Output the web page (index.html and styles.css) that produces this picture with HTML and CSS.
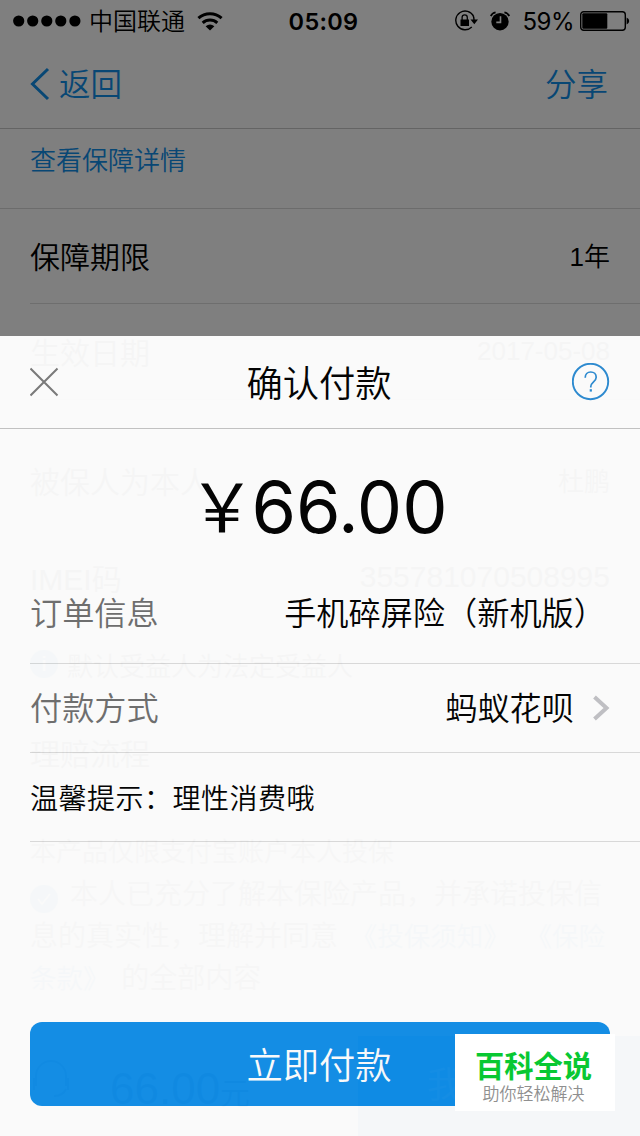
FILE: index.html
```html
<!DOCTYPE html>
<html lang="zh-CN">
<head>
<meta charset="utf-8">
<title>确认付款</title>
<link rel="stylesheet" href="styles.css">
</head>
<body>
<div class="phone">
  <div class="page">
    <div class="status">
      <div class="status-left">
        <svg width="68" height="12" viewBox="0 0 68 12"><circle cx="5.7" cy="6" r="5.6"/><circle cx="19.7" cy="6" r="5.6"/><circle cx="33.8" cy="6" r="5.6"/><circle cx="47.8" cy="6" r="5.6"/><circle cx="61.9" cy="6" r="5.6"/></svg>
        <span class="carrier">中国联通</span>
        <svg class="wifi" width="26" height="19" viewBox="0 0 26 19" fill="none" stroke="#000" stroke-width="3"><path d="M1.4 6.1C8 .2 18 .2 24.6 6.1"/><path d="M5.7 10.9c4.2-3.8 10.4-3.8 14.6 0"/><path fill="#000" stroke="none" d="M8.600 14.200Q13 10.900 17.400 14.200L13 18.600Z"/></svg>
      </div>
      <span class="time">05:09</span>
      <div class="status-right">
        <svg width="25" height="22" viewBox="0 0 25 22"><path d="M19.600 6.200A9.400 9.400 0 1 0 17.800 17.100M18.600 4.700A9.400 9.400 0 0 1 20 10" fill="none" stroke="#000" stroke-width="1.400"/><path d="M16.500 9.600h7.500l-3.700 4.600zM6.500 9.500h8.500v6.500H6.500z"/><path d="M8.100 10V7.400a2.600 2.600 0 0 1 5.200 0V10" fill="none" stroke="#000" stroke-width="1.300"/></svg>
        <svg class="alarm" width="20" height="20" viewBox="0 0 20 20"><circle cx="10" cy="10.700" r="8.700"/><path d="M.8 5.100Q2 1.900 5.600 1.300M14.400 1.300Q18 1.900 19.200 5.100" fill="none" stroke="#000" stroke-width="1.800"/><path d="M10.500 5.200v6.200H6.300" fill="none" stroke="#fff" stroke-width="1.600"/></svg>
        <span class="percent">59%</span>
        <svg width="50" height="20" viewBox="0 0 50 20"><rect x=".7" y=".7" width="44.600" height="18.600" rx="3" fill="none" stroke="#000" stroke-width="1.400"/><rect x="2.300" y="2.300" width="25" height="15.400" rx="1"/><path d="M46.600 6.500q2.600 1 2.600 3.500t-2.600 3.500z"/></svg>
      </div>
    </div>
    <div class="nav">
      <div class="back"><svg width="20" height="34" viewBox="0 0 20 34" fill="none" stroke="#108ee9" stroke-width="3"><path d="M18 2L2.500 17L18 32"/></svg><span>返回</span></div>
      <span>分享</span>
    </div>
    <div class="detail-link">查看保障详情</div>
    <div class="row row-term"><span>保障期限</span><span class="value">1年</span></div>
    <div class="row row-date"><span>生效日期</span><span class="value">2017-05-08</span></div>
    <div class="row row-who"><span>被保人为本人</span><span class="value">杜鹏</span></div>
    <div class="row row-imei"><span>IMEI码</span><span class="value imei">355781070508995</span></div>
    <div class="note"><i class="badge">i</i>默认受益人为法定受益人</div>
    <div class="row row-claim"><span>理赔流程</span></div>
    <div class="terms">
      <div class="terms-limit">本产品仅限支付宝账户本人投保</div>
      <div class="terms-line"><i class="badge"><svg width="16" height="14" viewBox="0 0 16 14" fill="none" stroke="#fff" stroke-width="2"><path d="M2 7l4 5L14 2"/></svg></i>本人已充分了解本保险产品，并承诺投保信</div>
      <div class="terms-line">息的真实性，理解并同意 <span class="blue book">《投保须知》</span> <span class="blue">《保险</span></div>
      <div class="terms-line"><span class="blue">条款》</span> <span class="rest">的全部内容</span></div>
    </div>
    <div class="buybar">
      <svg class="service" width="42" height="60" viewBox="0 0 42 60" fill="none" stroke="#777" stroke-width="2"><path d="M6 30V20a15 15 0 0 1 30 0v10M4 22v12M38 22v12M36 33q-3 7-12 7"/></svg>
      <span class="buy-price">66.00<small>元</small></span>
      <span class="buy-action">我</span>
    </div>
  </div>
  <div class="scrim"></div>
  <div class="sheet">
    <div class="sheet-head">
      <svg width="30" height="30" viewBox="0 0 30 30" fill="none" stroke="#7a7a7a" stroke-width="2"><path d="M.5 1.500L27.500 28.500M27.500 1.500L.5 28.500"/></svg>
      <span class="sheet-title">确认付款</span>
      <svg width="38" height="38" viewBox="0 0 38 38" fill="none" stroke="#2a8bd3"><circle cx="18.500" cy="18.500" r="17.700" stroke-width="1.900"/><path d="M13.200 14.700c0-3.500 2.300-5.700 5.500-5.700s5.500 2.100 5.500 5.200c0 4.500-5.400 4.700-5.400 9.400v1" stroke-width="1.700"/><path d="M18.800 26.200v2.400" stroke-width="2.200"/></svg>
    </div>
    <div class="amount"><span class="yen">￥</span>66.00</div>
    <div class="list">
      <div class="item order"><span class="label">订单信息</span><span>手机碎屏险（新机版）</span></div>
      <div class="item pay"><span class="label">付款方式</span><span class="method"><span>蚂蚁花呗</span><svg width="18" height="26" viewBox="0 0 18 26" fill="none" stroke="#c2c2c6" stroke-width="4"><path d="M2.500 2L14.500 13L2.500 24"/></svg></span></div>
      <div class="item tip">温馨提示：理性消费哦</div>
    </div>
    <div class="confirm">立即付款</div>
  </div>
  <div class="watermark"><b>百科全说</b><span>助你轻松解决</span></div>
</div>
</body>
</html>
```
FILE: styles.css
```css
* { box-sizing: border-box; }
body { margin: 0; }
svg { display: block; flex: none; }
.phone {
  position: relative;
  width: 640px;
  height: 1136px;
  overflow: hidden;
  background: #fff;
  color: #000;
  font-family: "Liberation Sans", "Noto Sans CJK SC", sans-serif;
  font-weight: 350;
  white-space: nowrap;
}
.page { height: 1136px; display: flex; flex-direction: column; }
.page > * { flex: none; }

.status { height: 40px; display: grid; grid-template-columns: 1fr auto 1fr; align-items: center; padding: 1px 10px 0 13px; font-family: Inter, "Noto Sans CJK SC", sans-serif; font-size: 24px; line-height: 39px; }
.status-left, .status-right { display: flex; align-items: center; }
.status-left { gap: 8px; }
.carrier { padding-top: 1px; }
.wifi { margin-left: 4px; }
.time { font-weight: 600; font-size: 23.5px; letter-spacing: .3px; padding: 0 0 0 4px; }
.status-right { justify-content: flex-end; }
.alarm { margin: 0 12px 0 11px; }
.percent { font-weight: 400; margin-right: 6px; letter-spacing: -.5px; }

.nav { height: 89px; display: flex; justify-content: space-between; align-items: center; padding: 0 32px 0 30px; border-bottom: 1px solid #c8c8c8; color: #108ee9; font-size: 31.5px; }
.nav span { padding-bottom: 4px; }
.back { display: flex; align-items: center; gap: 9px; }
.detail-link { height: 80px; padding: 2px 30px 0; line-height: 60px; border-bottom: 1px solid #d8d8d8; color: #108ee9; font-size: 26px; }
.row { margin-left: 30px; padding: 0 30px 1px 0; display: flex; justify-content: space-between; align-items: center; font-size: 30px; border-bottom: 1px solid #ddd; }
.value { font-size: 26px; }
.imei { font-size: 30px; }
.row-term { height: 95px; padding-bottom: 3px; }
.row-date { height: 96px; }
.row-who { height: 160px; border: 0; }
.row-imei { height: 34px; border: 0; }
.note { height: 140px; padding-left: 30px; display: flex; align-items: center; font-size: 26px; }
.note .badge { margin-right: 9px; }
.row-claim { height: 36px; border: 0; }
.badge { width: 28px; height: 28px; margin-right: 12px; border-radius: 50%; background: #108ee9; color: #fff; display: inline-flex; align-items: center; justify-content: center; font: bold 20px "Liberation Sans", sans-serif; vertical-align: -2px; }
.terms { height: 266px; padding: 62px 30px 0; font-size: 28px; color: #333; }
.terms-limit { font-size: 26px; line-height: 40px; margin-bottom: 2px; }
.terms-line { line-height: 41.5px; }
.book { margin: 0 8px 0 5px; }
.rest { margin-left: 4px; }
.blue { color: #108ee9; font-size: 26.500px; }
.buybar { height: 100px; display: flex; align-items: center; padding-left: 30px; }
.service { margin-right: 38px; }
.buy-price { width: 248px; padding-top: 5px; font-size: 44px; color: #444; }
.buy-price small { font-size: 30px; }
.buy-action { flex: 1; height: 100px; padding-left: 69px; line-height: 100px; font-size: 36px; background: #108ee9; color: #fff; }

.scrim { position: absolute; inset: 0; background: rgba(0, 0, 0, .5); }
.sheet { position: absolute; left: 0; right: 0; bottom: 0; height: 800px; background: #fff; opacity: .96; display: flex; flex-direction: column; }
.sheet-head { height: 93px; padding: 0 30px; display: grid; grid-template-columns: 38px 1fr 38px; align-items: center; border-bottom: 1px solid #c4c4c4; }
.sheet-title { text-align: center; font-size: 36.3px; padding: 0 2px 3px 0; }
.amount { height: 156px; display: flex; justify-content: center; align-items: center; font: 400 72px Inter, sans-serif; letter-spacing: -.1px; padding-bottom: 2px; }
.yen { font: 400 67px/1 "Noto Sans CJK SC", sans-serif; margin: -7px -4px 0 -4px; }
.list { margin-left: 30px; }
.item { display: flex; justify-content: space-between; align-items: center; padding-right: 30px; border-bottom: 1px solid #dcdcdc; font-size: 32.200px; }
.label { color: #6e6e6e; }
.order { height: 79px; padding-bottom: 26px; }
.order span + span { padding-right: 4px; }
.pay { height: 89px; }
.pay .label, .method span { padding-bottom: 4px; }
.tip { height: 89px; font-size: 28px; letter-spacing: .5px; }
.method { display: flex; align-items: center; gap: 18px; }
.confirm { height: 84px; margin: auto 30px 30px; padding-right: 2px; border-radius: 12px; background: #108ee9; color: #fff; text-align: center; font-size: 36.300px; line-height: 89px; }
.watermark { position: absolute; left: 455px; top: 1034px; width: 160px; height: 77px; background: #fff; display: flex; flex-direction: column; align-items: center; padding: 17px 3px 0 0; }
.watermark b { color: #08c832; font-size: 29.300px; line-height: 32px; }
.watermark span { color: #8f8f8f; font-size: 17px; line-height: 23px; }
```
